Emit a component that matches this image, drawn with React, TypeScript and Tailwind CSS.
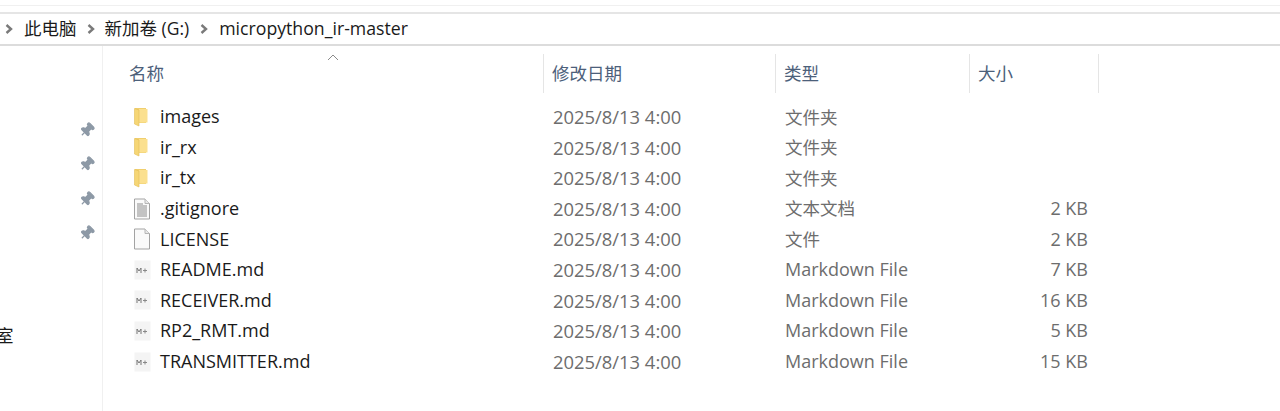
import { Pin } from "lucide-react";

type FileRow = {
  name: string;
  date: string;
  kind: string;
  size?: string;
  icon: "folder" | "text" | "blank" | "md";
};

const rows: FileRow[] = [
  { name: "images", date: "2025/8/13 4:00", kind: "文件夹", icon: "folder" },
  { name: "ir_rx", date: "2025/8/13 4:00", kind: "文件夹", icon: "folder" },
  { name: "ir_tx", date: "2025/8/13 4:00", kind: "文件夹", icon: "folder" },
  { name: ".gitignore", date: "2025/8/13 4:00", kind: "文本文档", size: "2 KB", icon: "text" },
  { name: "LICENSE", date: "2025/8/13 4:00", kind: "文件", size: "2 KB", icon: "blank" },
  { name: "README.md", date: "2025/8/13 4:00", kind: "Markdown File", size: "7 KB", icon: "md" },
  { name: "RECEIVER.md", date: "2025/8/13 4:00", kind: "Markdown File", size: "16 KB", icon: "md" },
  { name: "RP2_RMT.md", date: "2025/8/13 4:00", kind: "Markdown File", size: "5 KB", icon: "md" },
  { name: "TRANSMITTER.md", date: "2025/8/13 4:00", kind: "Markdown File", size: "15 KB", icon: "md" },
];

function Chevron() {
  return (
    <svg width="8" height="10" viewBox="0 0 8 10" className="shrink-0">
      <path d="M1.5 1 L6 5 L1.5 9" fill="none" stroke="#7a7a7a" strokeWidth="2.4" />
    </svg>
  );
}

function FileIcon({ icon }: { icon: FileRow["icon"] }) {
  if (icon === "folder") {
    return (
      <svg width="16" height="20" viewBox="0 0 16 20" className="ml-[2px]">
        <path d="M2 1 H13 V16 H2 Z" fill="#f0cf6e" />
        <path d="M6 2 H14.5 V15.5 H6 Z" fill="#fbe08f" />
        <path d="M1.5 1.5 L6 3 V19 L1.5 17 Z" fill="#f6d675" stroke="#e3bd58" strokeWidth="0.6" />
      </svg>
    );
  }
  if (icon === "md") {
    return (
      <svg width="18" height="20" viewBox="0 0 18 20" className="ml-[3px]">
        <rect x="0.5" y="0.5" width="16" height="19" fill="#f4f4f4" />
        <path d="M3 13 V8 L5 11 L7 8 V13" fill="none" stroke="#777" strokeWidth="1" />
        <path d="M9 10.5 H13 M11 8.5 V12.5" fill="none" stroke="#888" strokeWidth="1" />
      </svg>
    );
  }
  return (
    <svg width="18" height="22" viewBox="0 0 18 22" className="ml-[2px]">
      <path d="M1.5 1 H12 L16.5 5.5 V21 H1.5 Z" fill="#fafafa" stroke="#a3a3a3" />
      <path d="M12 1 V5.5 H16.5" fill="#e8e8e8" stroke="#b5b5b5" />
      {icon === "text" && (
        <path
          d="M4 6 H10 M4 8 H14 M4 10 H14 M4 12 H14 M4 14 H14 M4 16 H14 M4 18 H14"
          stroke="#8c8c8c"
        />
      )}
    </svg>
  );
}

export default function App() {
  return (
    <div className="h-[411px] w-[1280px] overflow-hidden bg-white font-['Open_Sans','Noto_Sans_CJK_SC',sans-serif] text-[18px]">
      {/* toolbar strip */}
      <div className="h-[14px] border-b-2 border-[#e5e5e5] pt-[5px]">
        <div className="h-px bg-[#f0f0f0]" />
      </div>

      {/* breadcrumb */}
      <div className="flex h-[32px] items-center border-b-2 border-[#dcdcdc] pb-[1px] pl-[5px] text-[17.5px] text-[#1a1a1a]">
        <Chevron />
        <span className="ml-[11px]">此电脑</span>
        <span className="ml-[10px]"><Chevron /></span>
        <span className="ml-[10px]">新加卷 (G:)</span>
        <span className="ml-[11px]"><Chevron /></span>
        <span className="ml-[11px] text-[17.7px]">micropython_ir-master</span>
      </div>

      <div className="flex h-[365px]">
        {/* nav pane */}
        <div className="w-[103px] shrink-0 border-r border-[#f0f0f0]">
          <div className="flex flex-col items-end gap-[18.5px] pt-[75.5px] pr-[7px]">
            <Pin size={16} className="rotate-45 fill-[#8d99a6] text-[#8d99a6]" />
            <Pin size={16} className="rotate-45 fill-[#8d99a6] text-[#8d99a6]" />
            <Pin size={16} className="rotate-45 fill-[#8d99a6] text-[#8d99a6]" />
            <Pin size={16} className="rotate-45 fill-[#8d99a6] text-[#8d99a6]" />
          </div>
          <div className="-ml-[4px] mt-[81px] text-[17.5px] text-[#1a1a1a]">室</div>
        </div>

        <div className="relative flex-1">
          <svg width="12" height="7" viewBox="0 0 12 7" className="absolute left-[224px] top-[8px]">
            <path d="M1 6 L6 1 L11 6" fill="none" stroke="#8a8a8a" />
          </svg>

          {/* column headers */}
          <div className="mt-[8px] flex h-[40px] items-center pb-[1px] text-[17.5px] text-[#4c607a]">
            <div className="flex h-full w-[441px] items-center border-r border-[#e5e5e5] pl-[26px]">名称</div>
            <div className="flex h-full w-[232px] items-center border-r border-[#e5e5e5] pl-[8px]">修改日期</div>
            <div className="flex h-full w-[194px] items-center border-r border-[#e5e5e5] pl-[8px]">类型</div>
            <div className="flex h-full w-[129px] items-center border-r border-[#e5e5e5] pl-[8px]">大小</div>
          </div>

          {/* file list */}
          <div className="mt-[7.5px]">
            {rows.map((row) => (
              <div key={row.name} className="flex h-[30.6px] items-center">
                <div className="flex w-[440px] items-center">
                  <div className="ml-[28px] flex w-[29px] justify-start">
                    <FileIcon icon={row.icon} />
                  </div>
                  <span className="text-[#1a1a1a]">{row.name}</span>
                </div>
                <div className="w-[232px] pl-[10px] text-[18.4px] text-[#6d6d6d]">{row.date}</div>
                <div className={row.icon === "md" ? "w-[194px] pl-[10px] text-[#6d6d6d]" : "w-[194px] pl-[10px] text-[17.5px] text-[#6d6d6d]"}>
                  {row.kind}
                </div>
                <div className="w-[119px] text-right text-[#6d6d6d]">{row.size}</div>
              </div>
            ))}
          </div>
        </div>
      </div>
    </div>
  );
}
